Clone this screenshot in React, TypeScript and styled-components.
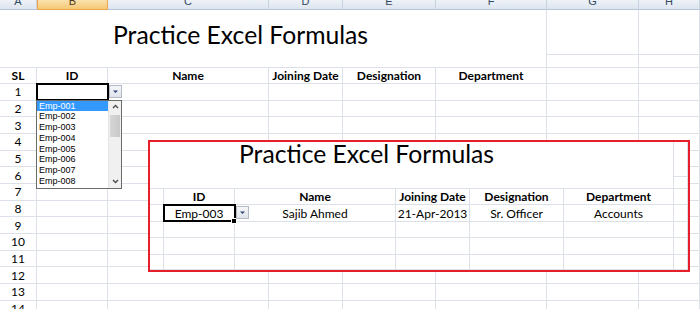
import React from "react";
import styled, { createGlobalStyle, css } from "styled-components";

const GRID = "#dbe0e9";
const OUTER_COLS = "37px 71px 161px 74px 93px 111px 92px 61px";
const INNER_COLS = "14px 71px 161px 74px 94px 110px 14px";

const GlobalStyle = createGlobalStyle`
  html, body {
    margin: 0;
    padding: 0;
    background: #ffffff;
    overflow: hidden;
  }
  body {
    font-family: Lato, "Open Sans", sans-serif;
    color: #000000;
  }
`;

const Page = styled.div`
  position: relative;
  width: 700px;
  height: 309px;
  overflow: hidden;
  background: #ffffff;
`;

const ColumnHeaderBar = styled.div`
  display: grid;
  grid-template-columns: ${OUTER_COLS};
  height: 10px;
`;

const ColumnHeader = styled.div<{ $active?: boolean }>`
  box-sizing: border-box;
  overflow: hidden;
  text-align: center;
  font-family: "Liberation Sans", Arial, sans-serif;
  font-size: 11px;
  line-height: 11px;
  color: #34485f;
  background: linear-gradient(#eef2f8, #dde5ef);
  border-right: 1px solid #c6d2e0;
  border-bottom: 1px solid #b6c6da;

  ${({ $active }) =>
    $active &&
    css`
      color: #4a3a1c;
      background: linear-gradient(#fbe1ae, #f5c874);
      border-left: 1px solid #f0a648;
      border-right: 1px solid #f0a648;
      border-bottom: 1px solid #f0a648;
    `}

  span {
    display: block;
    margin-top: -4px;
  }
`;

const Sheet = styled.div<{ $cols: string; $rows: string }>`
  display: grid;
  height: 100%;
  grid-template-columns: ${({ $cols }) => $cols};
  grid-template-rows: ${({ $rows }) => $rows};
`;

const Cell = styled.div<{ $bold?: boolean; $selected?: boolean }>`
  position: relative;
  box-sizing: border-box;
  border-right: 1px solid ${GRID};
  border-bottom: 1px solid ${GRID};
  display: flex;
  align-items: center;
  justify-content: center;
  font-size: 12px;
  font-weight: ${({ $bold }) => ($bold ? 700 : 400)};
  white-space: nowrap;

  ${({ $selected }) =>
    $selected &&
    css`
      z-index: 4;
      &::after {
        content: "";
        position: absolute;
        top: -1px;
        left: -1px;
        right: -2px;
        bottom: -1px;
        border: 2px solid #000000;
        pointer-events: none;
      }
    `}
`;

const TitleCell = styled.div<{ $span: number; $indent: number; $top: number }>`
  grid-column: 1 / span ${({ $span }) => $span};
  grid-row: 1 / span 2;
  box-sizing: border-box;
  border-right: 1px solid ${GRID};
  border-bottom: 1px solid ${GRID};
  padding: ${({ $top }) => $top}px 0 0 ${({ $indent }) => $indent}px;
  font-size: 24.7px;
  line-height: 1;
  white-space: nowrap;
`;

const FillHandle = styled.div`
  position: absolute;
  right: -3px;
  bottom: -3px;
  width: 4px;
  height: 4px;
  background: #000000;
  border: 1px solid #ffffff;
  z-index: 3;
`;

const DropButton = styled.div`
  position: absolute;
  left: calc(100% + 2px);
  top: 1px;
  width: 13px;
  height: 13px;
  box-sizing: border-box;
  border: 1px solid #b3bac6;
  background: linear-gradient(#f6f7f9, #dfe3ea);
  display: flex;
  align-items: center;
  justify-content: center;
  z-index: 5;
`;

const DropList = styled.div`
  position: absolute;
  left: -1px;
  top: 100%;
  width: 86px;
  height: 89px;
  box-sizing: border-box;
  border: 1px solid #6b6b6b;
  background: #ffffff;
  display: grid;
  grid-template-columns: 1fr 13px;
  z-index: 6;
`;

const Options = styled.div`
  display: flex;
  flex-direction: column;
`;

const Option = styled.div<{ $highlighted?: boolean }>`
  height: 10.75px;
  line-height: 10.75px;
  padding-left: 2px;
  font-family: "Liberation Sans", Arial, sans-serif;
  font-size: 9px;
  color: ${({ $highlighted }) => ($highlighted ? "#ffffff" : "#000000")};
  background: ${({ $highlighted }) => ($highlighted ? "#3399ff" : "transparent")};
`;

const ScrollTrack = styled.div`
  display: flex;
  flex-direction: column;
  background: #f0f0f0;
  border-left: 1px solid #e4e4e4;
`;

const ScrollArrow = styled.div`
  height: 12px;
  display: flex;
  align-items: center;
  justify-content: center;
`;

const ScrollThumb = styled.div`
  height: 22px;
  margin: 2px 1px 0;
  background: linear-gradient(90deg, #d6d6d6, #c9c9c9);
`;

const ScrollSpacer = styled.div`
  flex: 1;
`;

const RedFrame = styled.div`
  position: absolute;
  left: 148px;
  top: 140px;
  width: 542px;
  height: 132px;
  box-sizing: border-box;
  border: 2px solid #e61f2b;
  background: #ffffff;
  z-index: 8;
  overflow: hidden;
`;

const ArrowIcon = () => (
  <svg width="7" height="5" viewBox="0 0 7 5">
    <path d="M1 1.5h5L3.5 4z" fill="#2f4577" />
  </svg>
);

const Chevron = ({ up }: { up?: boolean }) => (
  <svg width="7" height="5" viewBox="0 0 7 5">
    <path
      d={up ? "M1 4L3.5 1.5L6 4" : "M1 1L3.5 3.5L6 1"}
      fill="none"
      stroke="#4d4d4d"
      strokeWidth="1.4"
    />
  </svg>
);

const employees = ["Emp-001", "Emp-002", "Emp-003", "Emp-004", "Emp-005", "Emp-006", "Emp-007", "Emp-008"];
const letters = ["A", "B", "C", "D", "E", "F", "G", "H"];
const headings = ["ID", "Name", "Joining Date", "Designation", "Department"];

export default function App() {
  return (
    <Page>
      <GlobalStyle />
      <ColumnHeaderBar>
        {letters.map((l) => (
          <ColumnHeader key={l} $active={l === "B"}>
            <span>{l}</span>
          </ColumnHeader>
        ))}
      </ColumnHeaderBar>

      <Sheet $cols={OUTER_COLS} $rows="45px 13px 16px repeat(14, 16.67px)">
        <TitleCell $span={6} $indent={113} $top={13}>
          Practice Excel Formulas
        </TitleCell>
        <Cell />
        <Cell />
        <Cell />
        <Cell />

        <Cell $bold>SL</Cell>
        {headings.map((h) => (
          <Cell key={h} $bold>
            {h}
          </Cell>
        ))}
        <Cell />
        <Cell />

        {Array.from({ length: 14 }, (_, i) => (
          <React.Fragment key={i}>
            <Cell>{i + 1}</Cell>
            {i === 0 ? (
              <Cell $selected>
                <DropButton>
                  <ArrowIcon />
                </DropButton>
                <DropList>
                  <Options>
                    {employees.map((e, k) => (
                      <Option key={e} $highlighted={k === 0}>
                        {e}
                      </Option>
                    ))}
                  </Options>
                  <ScrollTrack>
                    <ScrollArrow>
                      <Chevron up />
                    </ScrollArrow>
                    <ScrollThumb />
                    <ScrollSpacer />
                    <ScrollArrow>
                      <Chevron />
                    </ScrollArrow>
                  </ScrollTrack>
                </DropList>
              </Cell>
            ) : (
              <Cell />
            )}
            <Cell />
            <Cell />
            <Cell />
            <Cell />
            <Cell />
            <Cell />
          </React.Fragment>
        ))}
      </Sheet>

      <RedFrame>
        <Sheet $cols={INNER_COLS} $rows="35px 12px 16px 17px 16px 17px 1fr">
          <TitleCell $span={6} $indent={89} $top={0}>
            Practice Excel Formulas
          </TitleCell>
          <Cell />
          <Cell />

          <Cell />
          {headings.map((h) => (
            <Cell key={h} $bold>
              {h}
            </Cell>
          ))}
          <Cell />

          <Cell />
          <Cell $selected>
            Emp-003
            <FillHandle />
            <DropButton>
              <ArrowIcon />
            </DropButton>
          </Cell>
          <Cell>Sajib Ahmed</Cell>
          <Cell>21-Apr-2013</Cell>
          <Cell>Sr. Officer</Cell>
          <Cell>Accounts</Cell>
          <Cell />

          {Array.from({ length: 3 }, (_, i) => (
            <React.Fragment key={i}>
              {Array.from({ length: 7 }, (_, k) => (
                <Cell key={k} />
              ))}
            </React.Fragment>
          ))}
        </Sheet>
      </RedFrame>
    </Page>
  );
}
